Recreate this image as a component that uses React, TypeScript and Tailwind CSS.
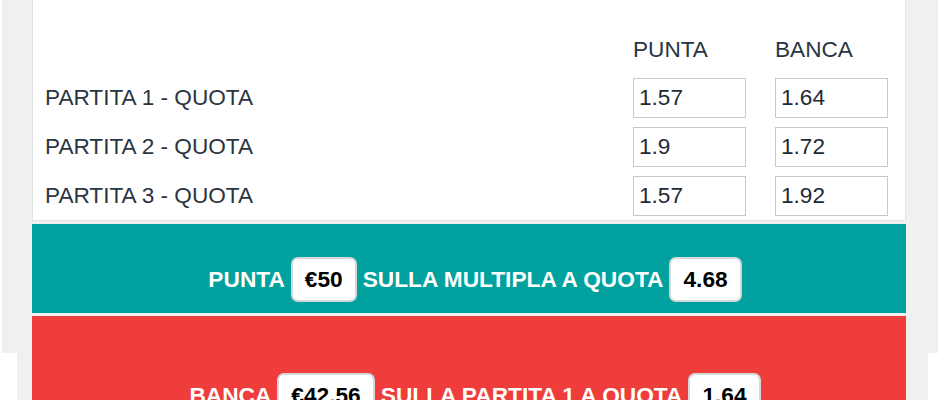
import React from "react";

const rows = [
  { label: "PARTITA 1 - QUOTA", punta: "1.57", banca: "1.64" },
  { label: "PARTITA 2 - QUOTA", punta: "1.9", banca: "1.72" },
  { label: "PARTITA 3 - QUOTA", punta: "1.57", banca: "1.92" },
];

function Box({ children }: { children: React.ReactNode }) {
  return (
    <span className="flex h-[45px] items-center rounded-[7px] border-2 border-[#d3d9db] bg-white px-[12px] text-[22.7px] font-bold text-black">
      {children}
    </span>
  );
}

export default function App() {
  return (
    <div
      className="flex h-[400px] w-[940px] overflow-hidden bg-white"
      style={{ fontFamily: '"Liberation Sans", Arial, Helvetica, sans-serif' }}
    >
      {/* left gutter */}
      <div className="flex w-[32px] shrink-0 flex-col">
        <div className="ml-[2px] h-[353px] shrink-0 bg-[#eff0f0]" />
        <div className="ml-[17px] flex-1 bg-[#eff0f0]" />
      </div>

      {/* main column */}
      <div className="flex w-[874px] shrink-0 flex-col bg-[#eff0f0]">
        <div className="h-[221px] shrink-0 border-x border-b border-[#e2e4e4] bg-white pl-[12px] pt-[37px]">
          <div className="flex h-[26px] items-center text-[22.6px] leading-[26px] text-[#2a3542]">
            <div className="w-[588px]" />
            <div className="w-[113px]">PUNTA</div>
            <div className="ml-[29px] w-[113px]">BANCA</div>
          </div>
          <div className="mt-[15px] flex flex-col gap-[9px]">
            {rows.map((r) => (
              <div key={r.label} className="flex items-center text-[22.6px] text-[#2a3542]">
                <div className="w-[588px] leading-[26px]">{r.label}</div>
                <div className="flex h-[40px] w-[113px] items-center border border-[#c6c8c9] pl-[5px] text-[#1f2a35]">
                  {r.punta}
                </div>
                <div className="ml-[29px] flex h-[40px] w-[113px] items-center border border-[#c6c8c9] pl-[5px] text-[#1f2a35]">
                  {r.banca}
                </div>
              </div>
            ))}
          </div>
        </div>

        <div className="mt-[3px] flex h-[89px] shrink-0 justify-center bg-[#00a19e] pl-[12px] pt-[33px]">
          <div className="flex h-[45px] items-center gap-[6px] text-[22.7px] font-bold text-white">
            <span>PUNTA</span>
            <Box>€50</Box>
            <span>SULLA MULTIPLA A QUOTA</span>
            <Box>4.68</Box>
          </div>
        </div>

        <div className="mt-[3px] flex flex-1 justify-center bg-[#ee3d3a] pl-[12px] pt-[57px]">
          <div className="flex h-[45px] items-center gap-[6px] text-[22.7px] font-bold text-white">
            <span>BANCA</span>
            <Box>€42.56</Box>
            <span>SULLA PARTITA 1 A QUOTA</span>
            <Box>1.64</Box>
          </div>
        </div>
      </div>

      {/* right gutter */}
      <div className="flex w-[34px] shrink-0 flex-col">
        <div className="mr-[2px] h-[353px] shrink-0 bg-[#eff0f0]" />
        <div className="mr-[12px] flex-1 bg-[#eff0f0]" />
      </div>
    </div>
  );
}
